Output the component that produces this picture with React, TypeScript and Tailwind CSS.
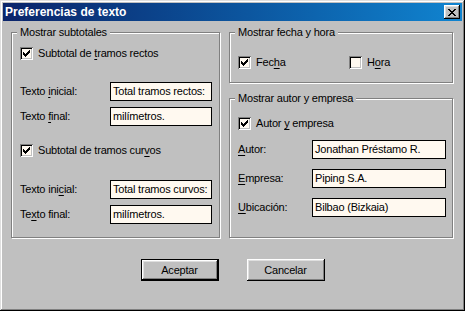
import type { ReactNode } from "react"

const raised = "shadow-[inset_-1px_-1px_#000,inset_1px_1px_#fff,inset_-2px_-2px_#808080,inset_2px_2px_#dfdfdf]"

function U({ children }: { children: ReactNode }) {
  return <span className="underline underline-offset-[2px] [text-decoration-skip-ink:none]">{children}</span>
}

function Check({ checked }: { checked?: boolean }) {
  return (
    <span className="flex w-[13px] h-[13px] shrink-0 items-center justify-center bg-[#fff9f0] shadow-[inset_1px_1px_#808080,inset_-1px_-1px_#fff,inset_2px_2px_#000,inset_-2px_-2px_#c0c0c0]">
      {checked && (
        <svg width="7" height="7" viewBox="0 0 7 7" shapeRendering="crispEdges">
          <path d="M0 2h1v3H0zM1 3h1v3H1zM2 4h1v3H2zM3 3h1v3H3zM4 2h1v3H4zM5 1h1v3H5zM6 0h1v3H6z" fill="#000" />
        </svg>
      )}
    </span>
  )
}

function CheckRow({ checked, children, className }: { checked?: boolean; children: ReactNode; className?: string }) {
  return (
    <div className={"flex items-center h-[13px] gap-[5px] " + (className ?? "")}>
      <Check checked={checked} />
      <span className="leading-[13px]">{children}</span>
    </div>
  )
}

function Group({ title, className, children }: { title: string; className?: string; children: ReactNode }) {
  return (
    <div className={"relative border border-[#808080] shadow-[1px_1px_0_#fff,inset_1px_1px_0_#fff] " + (className ?? "")}>
      <span className="absolute -top-[7px] left-[5px] bg-[#c0c0c0] px-[3px] leading-[13px]">{title}</span>
      {children}
    </div>
  )
}

function Field({ label, value, labelW, inputW, className }: { label: ReactNode; value: string; labelW: string; inputW: string; className?: string }) {
  return (
    <div className={"flex items-center " + (className ?? "")}>
      <span className={labelW + " leading-[13px]"}>{label}</span>
      <div className={inputW + " h-[19px] border border-black bg-[#fff9f0] pl-[2px] leading-[17px] whitespace-nowrap overflow-hidden"}>{value}</div>
    </div>
  )
}

export default function App() {
  return (
    <div className="w-[465px] h-[311px] bg-[#c0c0c0] p-[3px] flex flex-col font-['Liberation_Sans',Arial,sans-serif] text-[11px] tracking-[-0.2px] text-black shadow-[inset_-1px_-1px_#000,inset_1px_1px_#dfdfdf,inset_-2px_-2px_#808080,inset_2px_2px_#fff]">
      {/* title bar */}
      <div className="h-[18px] flex items-center justify-between pl-[2px] pr-[2px] bg-linear-to-r from-[#0a246a] to-[#1084d0]">
        <span className="text-white font-bold text-[12px] tracking-normal leading-none">Preferencias de texto</span>
        <div className={"w-[16px] h-[14px] flex items-center justify-center bg-[#c0c0c0] " + raised}>
          <svg width="8" height="7" viewBox="0 0 8 7" shapeRendering="crispEdges">
            <path d="M0 0h2v1H0zM6 0h2v1H6zM1 1h2v1H1zM5 1h2v1H5zM2 2h4v1H2zM3 3h2v1H3zM2 4h4v1H2zM1 5h2v1H1zM5 5h2v1H5zM0 6h2v1H0zM6 6h2v1H6z" fill="#000" />
          </svg>
        </div>
      </div>

      <div className="flex gap-[9px] mt-[11px] pl-[8px]">
        <Group title="Mostrar subtotales" className="w-[209px] h-[206px] pl-[8px] pt-[14px]">
          <CheckRow checked>Subtotal de <U>t</U>ramos rectos</CheckRow>
          <Field className="mt-[22px]" labelW="w-[90px]" inputW="w-[102px]" label={<>Texto <U>i</U>nicial:</>} value="Total tramos rectos:" />
          <Field className="mt-[6px]" labelW="w-[90px]" inputW="w-[102px]" label={<>Texto <U>f</U>inal:</>} value="milímetros." />
          <CheckRow checked className="mt-[18px]">Subtotal de tramos cur<U>v</U>os</CheckRow>
          <Field className="mt-[23px]" labelW="w-[90px]" inputW="w-[102px]" label={<>Texto ini<U>c</U>ial:</>} value="Total tramos curvos:" />
          <Field className="mt-[6px]" labelW="w-[90px]" inputW="w-[102px]" label={<>Te<U>x</U>to final:</>} value="milímetros." />
        </Group>

        <div className="flex flex-col gap-[15px] w-[224px]">
          <Group title="Mostrar fecha y hora" className="h-[51px] pl-[8px] pt-[23px]">
            <div className="flex">
              <CheckRow checked className="w-[111px]">Fec<U>h</U>a</CheckRow>
              <CheckRow>H<U>o</U>ra</CheckRow>
            </div>
          </Group>
          <Group title="Mostrar autor y empresa" className="h-[140px] pl-[8px] pt-[18px]">
            <CheckRow checked>Autor <U>y</U> empresa</CheckRow>
            <Field className="mt-[10px]" labelW="w-[74px]" inputW="w-[134px]" label={<><U>A</U>utor:</>} value="Jonathan Préstamo R." />
            <Field className="mt-[10px]" labelW="w-[74px]" inputW="w-[134px]" label={<><U>E</U>mpresa:</>} value="Piping S.A." />
            <Field className="mt-[10px]" labelW="w-[74px]" inputW="w-[134px]" label={<><U>U</U>bicación:</>} value="Bilbao (Bizkaia)" />
          </Group>
        </div>
      </div>

      <div className="flex justify-center gap-[28px] mt-[21px]">
        <button className="w-[78px] h-[22px] border border-black bg-[#c0c0c0] shadow-[inset_-1px_-1px_#000,inset_1px_1px_#fff,inset_-2px_-2px_#808080,inset_2px_2px_#dfdfdf] leading-none">
          Aceptar
        </button>
        <button className={"w-[78px] h-[22px] bg-[#c0c0c0] leading-none " + raised}>Cancelar</button>
      </div>
    </div>
  )
}
